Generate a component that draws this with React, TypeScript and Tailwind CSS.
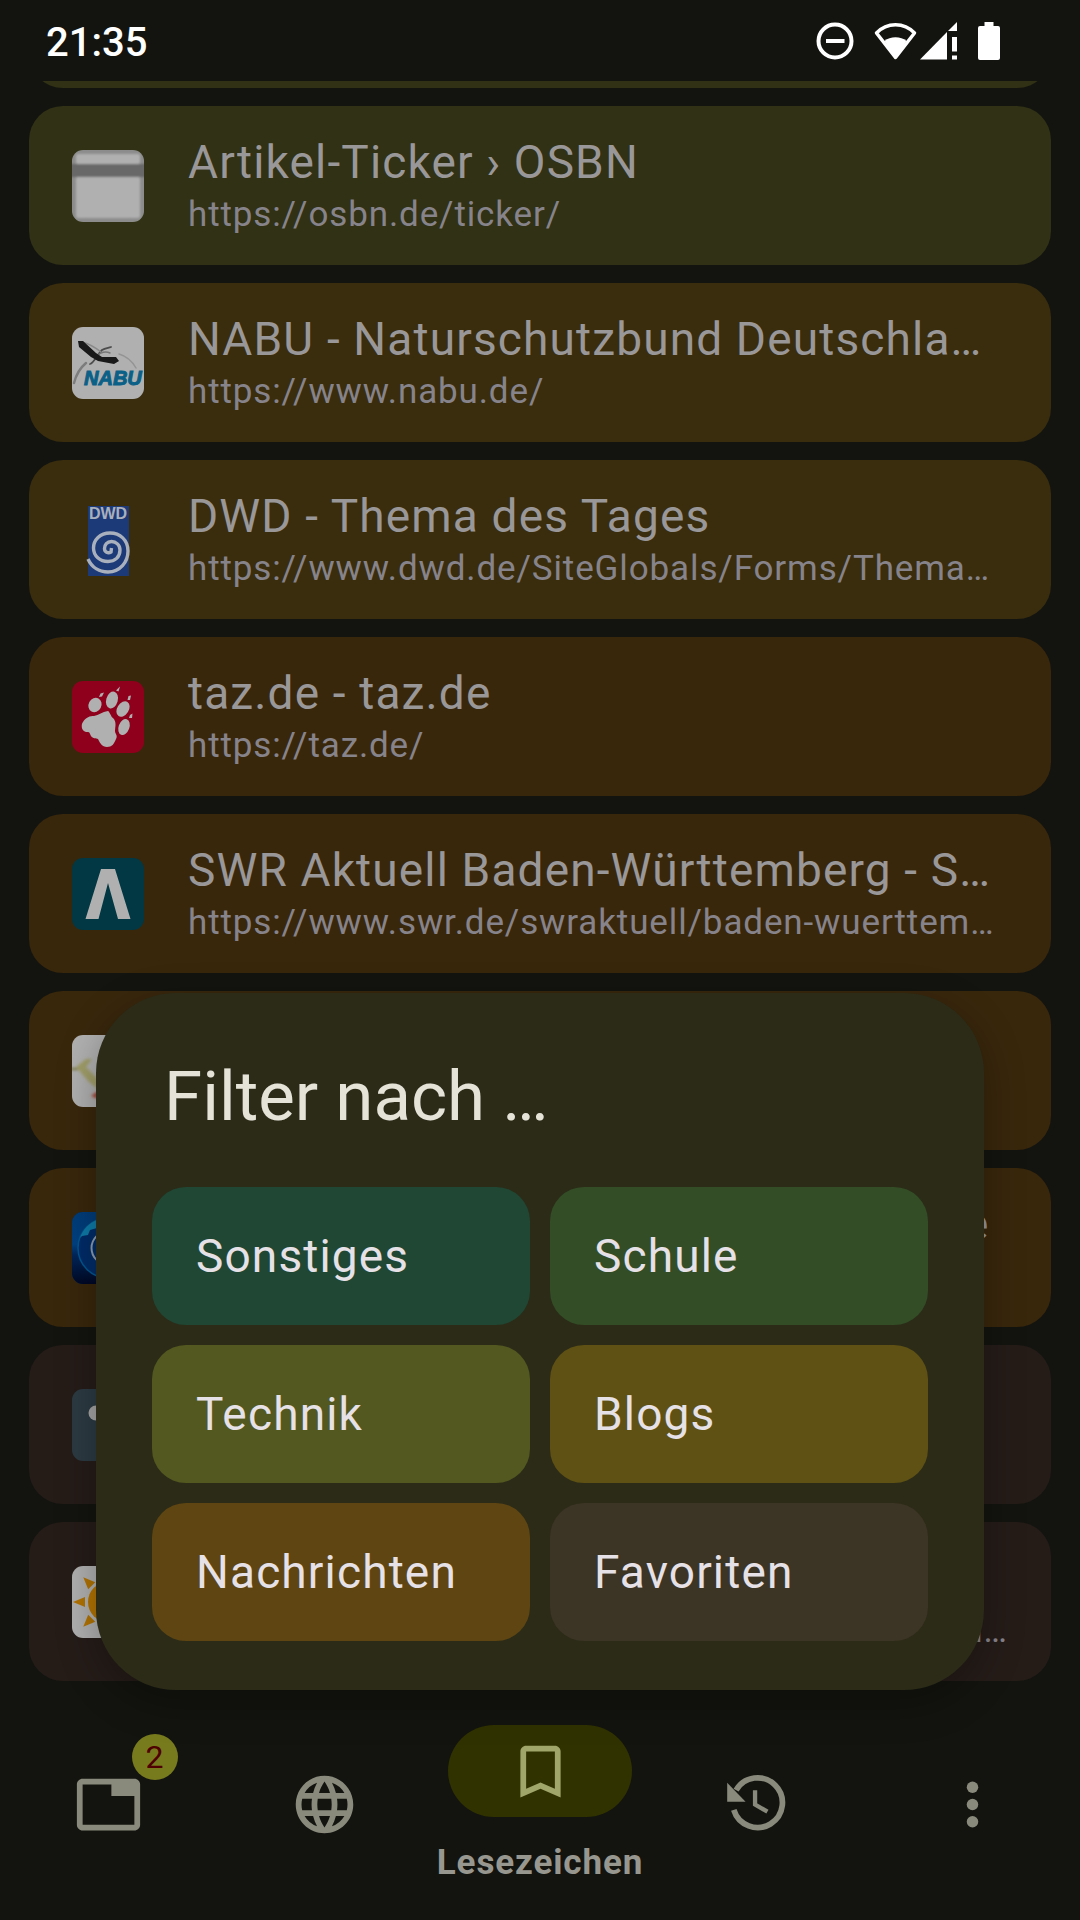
import type { ReactNode } from "react";
import { MdBookmarkBorder, MdLanguage, MdTab } from "react-icons/md";

type Bookmark = {
  name: string;
  title?: string;
  url?: string;
  tone: string;
  icon: ReactNode;
};

const OLIVE = "bg-[#303115]";
const GOLD = "bg-[#392d0e]";
const AMBER = "bg-[#39270c]";
const BROWN = "bg-[#251c18]";

function Favicon({ bg, children }: { bg: string; children: ReactNode }) {
  return (
    <svg viewBox="0 0 72 72" className={`size-[72px] shrink-0 rounded-[11px] ${bg}`} aria-hidden="true">
      {children}
    </svg>
  );
}

const windowIcon = (
  <Favicon bg="bg-[#8c8c8c]">
    <defs>
      <filter id="soft" x="-10%" y="-10%" width="120%" height="120%">
        <feGaussianBlur stdDeviation="1.2" />
      </filter>
    </defs>
    <g filter="url(#soft)">
      <rect x="4" y="4" width="64" height="10" rx="2" fill="#b0b0b0" />
      <rect x="4" y="27" width="64" height="41" rx="2" fill="#b0b0b0" />
      <rect x="-4" y="14" width="80" height="13" fill="#686868" />
    </g>
  </Favicon>
);

const nabuIcon = (
  <Favicon bg="bg-[#b0b0b0]">
    <g fill="none" strokeLinecap="round">
      <path d="M2 56C4 48 8 41 14 36" stroke="#7d7d7d" strokeWidth="2.5" />
      <path d="M47 27C54 29 60 34 64 41" stroke="#949494" strokeWidth="1.5" />
      <path d="M18 37C22 36 25 28 30 23C33 21 36 21 39 20" stroke="#4d4d4d" strokeWidth="1.8" />
      <path d="M10 15C18 17 24 21 29 25" stroke="#8a8a8a" strokeWidth="1.5" />
      <path d="M24 29C29 25 34 24 38 26" stroke="#777" strokeWidth="1.5" />
    </g>
    <path d="M6 14L11 14L24 26L30 30L44 30L47 34L42 37L26 34L19 30L7 20Z" fill="#191919" />
    <text x="12" y="58" fill="#0a6087" fontFamily="Liberation Sans, sans-serif" fontStyle="italic" fontWeight="700" fontSize="20" stroke="#0a6087" strokeWidth="1">
      NABU
    </text>
  </Favicon>
);

const dwdIcon = (
  <Favicon bg="bg-transparent">
    <rect x="16" y="2" width="41" height="70" fill="#1c3978" />
    <text x="36" y="15" textAnchor="middle" fill="#a9b0bd" fontFamily="Liberation Sans, sans-serif" fontWeight="700" fontSize="16">
      DWD
    </text>
    <path
      d="M16 55C20 64 28 68 36 68C48 68 56 58 56 47C56 36 48 29 38 29C28 29 21.500 36 21.500 44C21.500 52 28 57.500 36 57.500C43 57.500 48 53 48 46C48 41 44 37.500 39.500 37.500C35 37.500 32.500 41 32.500 44.500C32.500 48 36 50 39 48L39.500 44"
      fill="none"
      stroke="#a9b0bd"
      strokeWidth="3.4"
    />
  </Favicon>
);

const tazIcon = (
  <Favicon bg="bg-[#8f001c]">
    <g fill="#b0b0b0">
      <path d="M36 30C38 31 39 36 41 37C45 41 43 46 43 50C43 53 46 54 44 58C42 63 40 66 35 66C30 66 28 62 26 58C24 57 21 58 19 55C17 50 17 51 14 51C9 50 9 43 11 41C14 36 18 35 22 35C27 34 30 31 36 30Z" />
      <ellipse cx="23" cy="24" rx="6.4" ry="7.4" transform="rotate(28 23 24)" />
      <ellipse cx="40" cy="19" rx="5.8" ry="8.6" transform="rotate(16 40 19)" />
      <ellipse cx="51" cy="28" rx="5.8" ry="8.4" transform="rotate(32 51 28)" />
      <ellipse cx="52" cy="46" rx="5.4" ry="8.2" transform="rotate(20 52 46)" />
      <path d="M27 16L28.500 12.500L32 11.500L30 15.500Z" />
      <path d="M44 9.500L48 5.500L46.500 10.500Z" />
      <path d="M55.500 19L56.500 15L59 14.500L58 19Z" />
      <path d="M57 37L58 34L60.500 32.500L60 37Z" />
    </g>
  </Favicon>
);

const swrIcon = (
  <Favicon bg="bg-[#013844]">
    <path d="M29 11H43L58.500 61H46L36 25L26.500 61H13.500Z" fill="#b0b0b0" />
  </Favicon>
);

const ribbonIcon = (
  <Favicon bg="bg-[#b0b0b0]">
    <defs>
      <filter id="haze" x="-20%" y="-20%" width="140%" height="140%">
        <feGaussianBlur stdDeviation="1.5" />
      </filter>
    </defs>
    <g filter="url(#haze)">
      <path d="M-2 34H6" stroke="#77753f" strokeWidth="2" />
      <path d="M4 32L14 24L20 24L14 32L28 46V56L16 46Z" fill="#9c9955" opacity="0.8" />
      <path d="M19 61L26 56V64Z" fill="#a1402f" />
    </g>
  </Favicon>
);

const globeIcon = (
  <Favicon bg="bg-[#002a60]">
    <defs>
      <linearGradient id="sea" x1="0" y1="0" x2="0" y2="1">
        <stop offset="0" stopColor="#003c78" />
        <stop offset="0.45" stopColor="#004080" />
        <stop offset="0.6" stopColor="#00265a" />
        <stop offset="1" stopColor="#000824" />
      </linearGradient>
    </defs>
    <rect width="72" height="72" fill="url(#sea)" />
    <circle cx="36" cy="36" r="30" fill="#002c68" stroke="#00568f" strokeWidth="1.5" />
    <path d="M8 26C11 17 17 11 25 8V16L18 18L16 23L10 24Z" fill="#0e7aa6" />
    <circle cx="36" cy="36" r="16.500" fill="none" stroke="#8c9cb0" strokeWidth="2" />
  </Favicon>
);

const dotIcon = (
  <Favicon bg="bg-[#2c3a42]">
    <circle cx="24" cy="24" r="7.500" fill="#a3a3a3" />
  </Favicon>
);

const sunIcon = (
  <Favicon bg="bg-[#b0b0b0]">
    <g fill="#b27303">
      <circle cx="36" cy="36" r="20" />
      {[0, 45, 90, 135, 180, 225, 270, 315].map((angle) => (
        <path key={angle} d="M1 36L13 31V41Z" transform={`rotate(${angle} 36 36)`} />
      ))}
    </g>
  </Favicon>
);

const bookmarks: Bookmark[] = [
  { name: "OSBN", tone: OLIVE, icon: windowIcon },
  { name: "Artikel-Ticker", title: "Artikel-Ticker › OSBN", url: "https://osbn.de/ticker/", tone: OLIVE, icon: windowIcon },
  { name: "NABU", title: "NABU - Naturschutzbund Deutschla…", url: "https://www.nabu.de/", tone: GOLD, icon: nabuIcon },
  { name: "DWD", title: "DWD - Thema des Tages", url: "https://www.dwd.de/SiteGlobals/Forms/Thema…", tone: GOLD, icon: dwdIcon },
  { name: "taz", title: "taz.de - taz.de", url: "https://taz.de/", tone: AMBER, icon: tazIcon },
  { name: "SWR Aktuell", title: "SWR Aktuell Baden-Württemberg - S…", url: "https://www.swr.de/swraktuell/baden-wuerttem…", tone: AMBER, icon: swrIcon },
  { name: "Zeitung", tone: AMBER, icon: ribbonIcon },
  { name: "Tagesschau", title: "Aktuelle Nachrichten - tagesschau.de", tone: AMBER, icon: globeIcon },
  { name: "Favorit", tone: BROWN, icon: dotIcon },
  { name: "Wetter", url: "https://www.wetter.de/deutschland/vorhersagen…", tone: BROWN, icon: sunIcon },
];

const filters = [
  { label: "Sonstiges", tone: "bg-[#204733]" },
  { label: "Schule", tone: "bg-[#334d26]" },
  { label: "Technik", tone: "bg-[#52581f]" },
  { label: "Blogs", tone: "bg-[#5f5113]" },
  { label: "Nachrichten", tone: "bg-[#5f4511]" },
  { label: "Favoriten", tone: "bg-[#3c3424]" },
];

function StatusBar() {
  return (
    <header className="flex h-[81px] shrink-0 items-center pr-20 pl-[46px] text-white">
      <time className="pt-1 text-[40px] leading-[48px] font-medium">21:35</time>
      <div className="ml-auto flex items-center" aria-hidden="true">
        <svg viewBox="0 0 38 38" className="mr-5 size-[38px]" fill="none" stroke="currentColor" strokeWidth="4">
          <circle cx="19" cy="19" r="16.500" />
          <path d="M10 19H28.500" />
        </svg>
        <svg viewBox="0 0 43 38" className="mr-[3px] h-[38px] w-[43px]">
          <path d="M2.500 11C13 0 30 0 40.500 11L21.500 35.500Z" fill="none" stroke="currentColor" strokeWidth="3.500" strokeLinejoin="round" />
          <path d="M10.500 19C16 14 27 14 32.500 19L21.500 35.500Z" fill="currentColor" />
        </svg>
        <svg viewBox="0 0 38 38" className="mr-5 size-[38px]" fill="currentColor">
          <path d="M0 37.500L27 10V37.500Z" />
          <path d="M28 9L37 0V9Z" />
          <path d="M32 15H37V29.500H32ZM32 33.500H37V37.500H32Z" />
        </svg>
        <svg viewBox="0 0 22 38" className="h-[38px] w-[22px]" fill="currentColor">
          <path d="M6.500 0H15.500V4H20Q22 4 22 6V36Q22 38 20 38H2Q0 38 0 36V6Q0 4 2 4H6.500Z" />
        </svg>
      </div>
    </header>
  );
}

function BookmarkCard({ name, title, url, tone, icon }: Bookmark) {
  return (
    <li className="shrink-0">
      <a href="#" aria-label={title ?? name} className={`flex h-[159px] items-center gap-11 rounded-[34px] pr-10 pl-[43px] ${tone}`}>
        {icon}
        <span className="flex min-w-0 flex-col gap-1 whitespace-nowrap">
          <span className="min-h-[54px] text-[46px] leading-[54px] tracking-wide text-[#9a9799]">{title}</span>
          <span className="min-h-[44px] text-[35px] leading-[44px] tracking-wide text-[#87838a]">{url}</span>
        </span>
      </a>
    </li>
  );
}

function HistoryIcon() {
  return (
    <svg viewBox="0 0 24 24" className="size-[69px]" fill="none" stroke="currentColor" aria-hidden="true">
      <path d="M4.900 7A8.650 8.650 0 1 1 4.100 13.900" strokeWidth="2" />
      <path d="M1.800 4.400V11H8.200Z" fill="currentColor" stroke="none" />
      <path d="M11.500 7V12L15.800 14.500" strokeWidth="1.500" />
    </svg>
  );
}

function BottomNav() {
  return (
    <nav className="grid h-[222px] shrink-0 grid-cols-5 pt-[7px] text-[#898a7c]" aria-label="Navigation">
      <button type="button" aria-label="Tabs, 2" className="flex items-center justify-center pb-4">
        <span className="relative">
          <MdTab className="size-[69px]" />
          <span className="absolute -top-9 left-[58px] flex size-[46px] items-center justify-center rounded-full bg-[#787a1e] text-[32px] leading-[36px] text-[#4f0000]">
            2
          </span>
        </span>
      </button>
      <button type="button" aria-label="Web" className="flex items-center justify-center pb-4">
        <MdLanguage className="size-[69px]" />
      </button>
      <button type="button" aria-current="page" className="flex flex-col items-center pt-5">
        <span className="flex h-[92px] w-[184px] items-center justify-center rounded-full bg-[#303200] text-[#a0a56a]">
          <MdBookmarkBorder className="size-[69px]" />
        </span>
        <span className="mt-6 text-[35px] leading-[44px] font-bold tracking-wide text-[#98978f]">Lesezeichen</span>
      </button>
      <button type="button" aria-label="Verlauf" className="flex items-center justify-center pb-4">
        <HistoryIcon />
      </button>
      <button type="button" aria-label="Mehr" className="flex items-center justify-center pb-4">
        <svg viewBox="0 0 24 24" className="size-[69px]" fill="currentColor" aria-hidden="true">
          <circle cx="12" cy="6" r="2" />
          <circle cx="12" cy="12" r="2" />
          <circle cx="12" cy="18" r="2" />
        </svg>
      </button>
    </nav>
  );
}

function FilterDialog() {
  return (
    <div className="absolute inset-0 flex flex-col justify-end px-24 pb-[230px]">
      <section
        role="dialog"
        aria-labelledby="filter-title"
        className="rounded-[80px] bg-[#2b2b18] px-14 pt-16 pb-[49px] shadow-[0_12px_40px_rgba(0,0,0,0.3)]"
      >
        <h2 id="filter-title" className="pl-3 text-[69px] leading-[80px] text-[#e5e3d8]">
          Filter nach …
        </h2>
        <div className="mt-[50px] grid grid-cols-2 gap-5">
          {filters.map(({ label, tone }) => (
            <button
              key={label}
              type="button"
              className={`h-[138px] rounded-[34px] px-11 text-left text-[46px] leading-[54px] tracking-wide text-[#e6e1e6] ${tone}`}
            >
              {label}
            </button>
          ))}
        </div>
      </section>
    </div>
  );
}

export default function App() {
  return (
    <div className="relative flex h-screen flex-col overflow-hidden bg-[#13140f] font-[Roboto,sans-serif]">
      <StatusBar />
      <main className="flex min-h-0 flex-1 flex-col justify-end overflow-hidden px-[29px] pb-[17px]">
        <ul className="flex flex-col gap-[18px]">
          {bookmarks.map((bookmark) => (
            <BookmarkCard key={bookmark.name} {...bookmark} />
          ))}
        </ul>
      </main>
      <BottomNav />
      <FilterDialog />
    </div>
  );
}
